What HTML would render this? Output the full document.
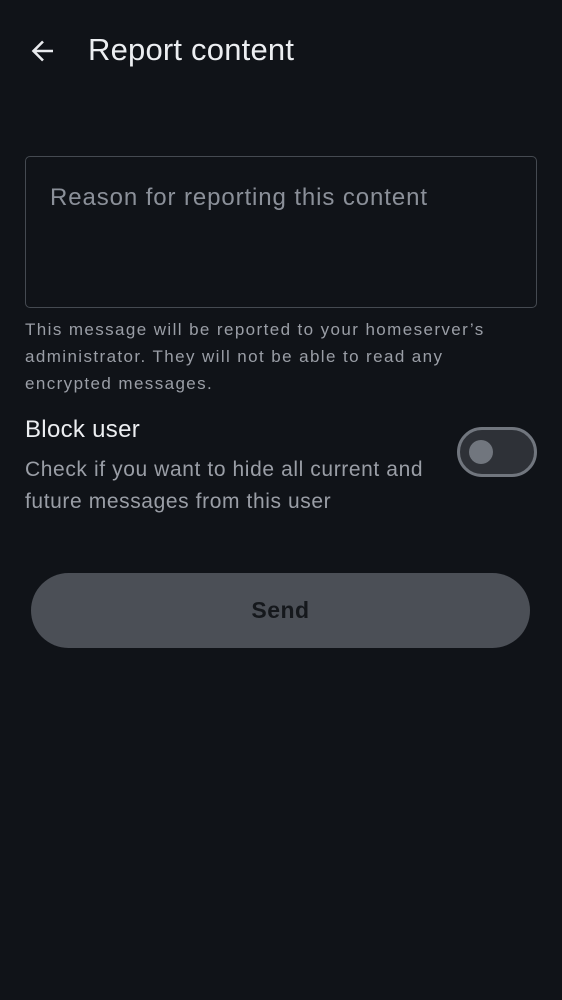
<!DOCTYPE html>
<html><head><style>
body{margin:0;width:562px;height:1000px;background:#101318;font-family:"Liberation Sans",sans-serif;position:relative;overflow:hidden}
.a{position:absolute}
</style></head><body>
<svg class="a" style="left:29px;top:37px" width="28" height="28" viewBox="0 0 28 28"><path d="M24 14H5M14 4.5L4.5 14 14 23.5" stroke="#e9ebee" stroke-width="2.6" fill="none"/></svg>
<div class="a" style="left:88px;top:32px;font-size:31px;color:#eceef1;letter-spacing:0.2px">Report content</div>
<div class="a" style="left:25px;top:156px;width:510px;height:150px;border:1px solid #454a51;border-radius:5px"></div>
<div class="a" style="left:50px;top:184px;font-size:24px;color:#8b9099;letter-spacing:0.9px">Reason for reporting this content</div>
<div class="a" style="left:25px;top:316px;font-size:17px;line-height:27px;color:#9a9ea6;letter-spacing:1.4px">This message will be reported to your homeserver’s<br>administrator. They will not be able to read any<br>encrypted messages.</div>
<div class="a" style="left:25px;top:416px;font-size:24px;color:#eceef1;letter-spacing:0.3px">Block user</div>
<div class="a" style="left:25px;top:454px;font-size:21px;line-height:32px;color:#9a9ea6;letter-spacing:0.6px">Check if you want to hide all current and<br>future messages from this user</div>
<div class="a" style="left:457px;top:427px;width:74px;height:44px;border:3px solid #71767e;border-radius:26px;background:#2e3137"></div>
<div class="a" style="left:469px;top:440px;width:24px;height:24px;border-radius:50%;background:#71767e"></div>
<div class="a" style="left:31px;top:573px;width:499px;height:75px;border-radius:38px;background:#4b4f56;color:#15181c;font-size:23px;text-align:center;line-height:75px;font-weight:bold;letter-spacing:0.5px">Send</div>
</body></html>
